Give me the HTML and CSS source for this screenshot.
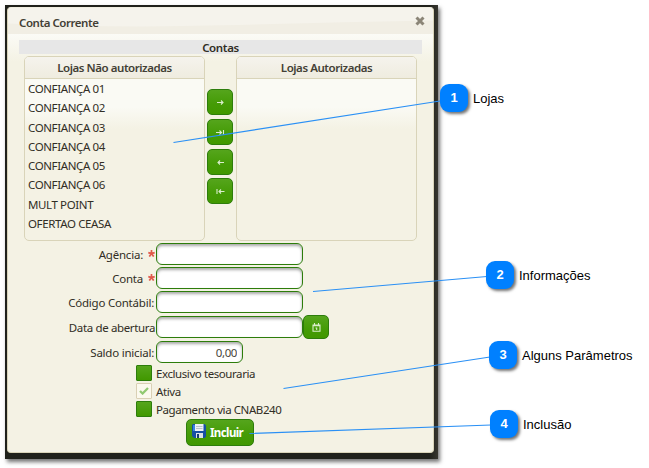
FILE: index.html
```html
<!DOCTYPE html>
<html lang="pt-BR">
<head>
<meta charset="utf-8">
<title>Conta Corrente</title>
<link rel="stylesheet" href="styles.css">
</head>
<body>
<main class="figure">
  <div class="frame">
    <section class="dialog">
      <header class="titlebar">
        <svg class="swoosh" viewBox="0 0 427 27" preserveAspectRatio="none"><path d="M0 16Q110 21 215 18T427 13V27H0Z" fill="#f1eee4"/></svg>
        <span class="title">Conta Corrente</span>
        <svg class="close" width="10" height="10" viewBox="0 0 10 10"><path d="M1.500 1.500L8.500 8.500M8.500 1.500L1.500 8.500" stroke="#8b8577" stroke-width="3"/></svg>
      </header>
      <div class="content">
        <h2 class="band"><span>Contas</span></h2>
        <div class="picklist">
          <div class="list">
            <h3 class="list-head">Lojas Não autorizadas</h3>
            <ul>
              <li>CONFIANÇA 01</li><li>CONFIANÇA 02</li><li>CONFIANÇA 03</li><li>CONFIANÇA 04</li>
              <li>CONFIANÇA 05</li><li>CONFIANÇA 06</li><li>MULT POINT</li><li>OFERTAO CEASA</li>
            </ul>
          </div>
          <div class="moves">
            <button class="btn"><svg width="12" height="8" viewBox="0 0 12 8"><path d="M3 4.500H9M7 2.500L9 4.500L7 6.500"/></svg></button>
            <button class="btn"><svg width="12" height="8" viewBox="0 0 12 8"><path d="M2 4.500H7.500M5.500 2.500L7.500 4.500L5.500 6.500M9.500 2V7"/></svg></button>
            <button class="btn"><svg width="12" height="8" viewBox="0 0 12 8"><path d="M10 4.500H4M6 2.500L4 4.500L6 6.500"/></svg></button>
            <button class="btn"><svg width="12" height="8" viewBox="0 0 12 8"><path d="M10.500 4.500H5M7 2.500L5 4.500L7 6.500M3 2V7"/></svg></button>
          </div>
          <div class="list">
            <h3 class="list-head">Lojas Autorizadas</h3>
          </div>
        </div>
        <form class="form">
          <label class="req"><span>Agência:</span><svg width="7" height="7" viewBox="0 0 7 7"><path d="M3.5 0V3.5M0.3 2.6L3.5 3.5L6.7 2.6M1.3 6.6L3.5 3.5L5.7 6.6"/></svg></label>
          <div class="field"><input type="text"></div>
          <label class="req"><span>Conta</span><svg width="7" height="7" viewBox="0 0 7 7"><path d="M3.5 0V3.5M0.3 2.6L3.5 3.5L6.7 2.6M1.3 6.6L3.5 3.5L5.7 6.6"/></svg></label>
          <div class="field"><input type="text"></div>
          <label>Código Contábil:</label>
          <div class="field"><input type="text"></div>
          <label class="tight">Data de abertura</label>
          <div class="field"><input type="text"><button type="button" class="btn cal"><svg width="9" height="9" viewBox="0 0 9 9"><path d="M1 2H8V8.2H1ZM2.5 0V2M6.5 0V2M1 2.7H8M3.5 5H4.7V7"/></svg></button></div>
          <label>Saldo inicial:</label>
          <div class="field"><input type="text" class="short" value="0,00"></div>
        </form>
        <div class="checks">
          <div class="check"><i class="box"></i><span>Exclusivo tesouraria</span></div>
          <div class="check"><i class="box on"><svg width="10" height="8" viewBox="0 0 10 8"><path d="M1 4L3.6 6.5L9 1"/></svg></i><span>Ativa</span></div>
          <div class="check"><i class="box"></i><span>Pagamento via CNAB240</span></div>
        </div>
        <button class="btn submit">
          <svg width="14" height="14" viewBox="0 0 14 14"><path class="disk" d="M1 0H12.500L14 1.500V13H13V14H2L0 12V1Z"/><path class="shine" d="M1 1H3V7H1Z"/><path class="paper" d="M3 0H11.500V7H3Z"/><path class="rule" d="M4 2H10.500V3H4ZM4 4H10.500V5H4Z"/><path class="shutter" d="M4 9H11V14H4Z"/><path class="slot" d="M5 10H7V14H5Z"/></svg>
          <span>Incluir</span>
        </button>
      </div>
    </section>
  </div>
  <svg class="lines" width="649" height="468" viewBox="0 0 649 468">
    <path d="M173.500 142.500L440 101M313 291.500L487 276.500M283.500 388.500L490 357M249.500 433.500L491 425"/>
  </svg>
  <div class="callout c1"><b>1</b><span>Lojas</span></div>
  <div class="callout c2"><b>2</b><span>Informações</span></div>
  <div class="callout c3"><b>3</b><span>Alguns Parâmetros</span></div>
  <div class="callout c4"><b>4</b><span>Inclusão</span></div>
</main>
</body>
</html>
```
FILE: styles.css
```css
* { box-sizing: border-box; }
body { margin: 0; background: #fff; font-family: "Noto Sans", "Open Sans", sans-serif; font-size: 12px; color: #312e25; }
.figure { position: relative; width: 649px; height: 468px; padding: 5px; overflow: hidden; }
.frame { width: 433px; height: 454px; padding: 2px 4px 6px 2px; background: linear-gradient(90deg, #20211b 0, #20211b 98%, #37362f); box-shadow: 2px 3px 4px rgba(0,0,0,.55); }
.dialog { width: 427px; height: 446px; border: 1px solid #d9d4b9; border-top-color: #f0ede0; border-radius: 4px; overflow: hidden; background: #f4f2e4; }
.titlebar { position: relative; height: 26px; display: flex; align-items: center; justify-content: space-between; padding: 3px 8px 0 11px; background: #f5f3ec; }
.swoosh { position: absolute; inset: 0; width: 100%; height: 100%; }
.title { position: relative; font-weight: 600; font-size: 11.500px; letter-spacing: -.45px; color: #433f35; }
.close { position: relative; top: -1.500px; }
.content { padding: 6px 11px 0; background: linear-gradient(#fbfbf6 0, #f4f2e4 28px); }
.band { margin: 0; height: 14px; width: 403px; background: #e7e7e7; font-size: 11.500px; line-height: 16px; font-weight: 600; text-align: center; letter-spacing: -.35px; }
.picklist { display: flex; padding: 2px 0 0 5px; height: 187px; }
.list { width: 181px; height: 185px; border: 1px solid #d9d4b9; border-radius: 5px; background: linear-gradient(#fafaf4 0, #fafaf4 50px, #f4f2e4 72px); overflow: hidden; }
.list-head { margin: 0; height: 22px; border-bottom: 1px solid #d9d4b9; background: linear-gradient(#f5f3ed, #efecdf); text-align: center; font-size: 11.500px; letter-spacing: -.45px; line-height: 22px; font-weight: 600; color: #433f35; }
.list ul { list-style: none; margin: 0; padding: 0 0 0 3px; }
.list li { height: 19.280px; line-height: 19px; font-size: 11.500px; white-space: nowrap; letter-spacing: -.38px; }
.moves { width: 31px; display: flex; flex-direction: column; align-items: center; gap: 3.800px; padding: 33px 1px 0 0; }
.btn { flex: none; width: 26px; height: 26px; padding: 0; border: 1px solid #2d7d0b; border-radius: 5px; background: linear-gradient(#55a51c, #449b05 60%, #419800); display: flex; align-items: center; justify-content: center; color: #fff; font: inherit; }
.moves path, .cal path { fill: none; stroke: #d9edcb; stroke-width: 1.100; }
.form { display: grid; grid-template-columns: 137px auto; grid-template-rows: 24px 24px 24.500px 25px 24px; align-items: center; padding-top: 1px; }
.form label { justify-self: end; padding: 2px 2px 0 0; white-space: nowrap; font-size: 11.500px; line-height: 16px; letter-spacing: -.22px; }
.form .tight { letter-spacing: -.36px; padding-right: 1px; }
.form .req { display: flex; align-items: center; gap: 5px; padding-right: 1px; }
.req svg { margin-top: -3px; }
.req path { fill: none; stroke: #e05a4c; stroke-width: 1.700; }
.field { display: flex; align-items: center; height: 24px; }
input { width: 147px; height: 22px; margin: 0; padding: 0 5px; border: 1px solid #2d7d0b; border-radius: 6px; background: #fff; box-shadow: inset 0 2px 3px #aaa; font: inherit; color: #4a463d; }
.short { width: 87px; text-align: right; font-size: 11.500px; letter-spacing: -.4px; padding-top: 1px; }
.cal { width: 26px; height: 24px; }
.checks { padding: 0 0 0 117px; }
.check { display: flex; align-items: center; height: 18px; gap: 4px; font-size: 11.500px; letter-spacing: -.42px; white-space: nowrap; }
.check span { padding-top: 1px; }
.box { width: 16px; height: 16px; border: 1px solid #2d7d0b; border-radius: 1px; background: linear-gradient(#55a51c, #419800); display: flex; align-items: center; justify-content: center; }
.box.on { border-color: #d9d0b4; background: #fbf9ee; }
.box path { fill: none; stroke: #90c971; stroke-width: 2.300; }
.submit { width: 68px; height: 27px; margin: 1px 0 9px 167px; justify-content: flex-start; gap: 4px; padding: 0 0 0 5px; font-weight: 700; font-size: 11.500px; letter-spacing: -.6px; }
.submit svg { margin-top: -2px; }
.disk { fill: #174fa5; }
.shine { fill: #3c86df; }
.paper { fill: #eef1f5; }
.rule { fill: #b9c2cb; }
.shutter { fill: #dce2e8; }
.slot { fill: #173b70; }
.lines { position: absolute; left: 0; top: 0; fill: none; stroke: #2a90f5; stroke-width: 1.200; }
.callout { position: absolute; display: flex; align-items: center; gap: 5px; font: 13px/16px "Liberation Sans", Arial, sans-serif; color: #000; white-space: nowrap; }
.callout b { width: 28px; height: 28px; border-radius: 9px; background: #0080ff; color: #fff; line-height: 28px; text-align: center; box-shadow: 2px 2px 3px rgba(0,0,0,.55); }
.callout span { padding-top: 1px; }
.c1 { left: 440px; top: 84px; }
.c2 { left: 486px; top: 261px; }
.c3 { left: 489px; top: 341px; }
.c4 { left: 490px; top: 410px; }
```
